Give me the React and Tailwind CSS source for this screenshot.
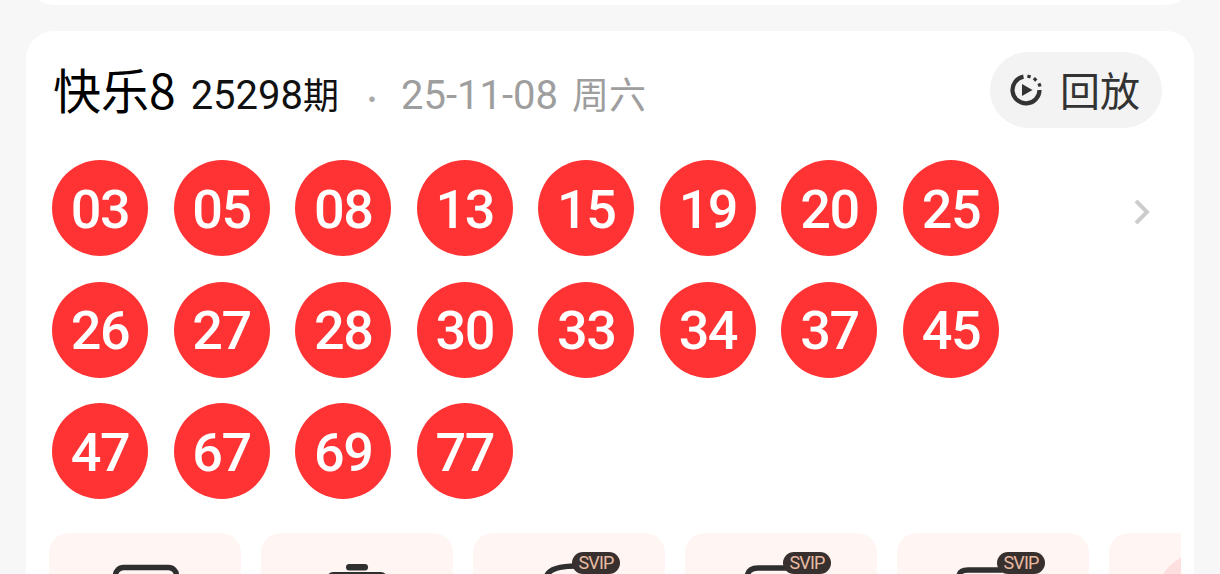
import React from "react";

const FONT = "[font-family:'Noto_Sans_CJK_SC','Noto_Sans',sans-serif]";

const numbers = ["03", "05", "08", "13", "15", "19", "20", "25", "26", "27", "28", "30", "33", "34", "37", "45", "47", "67", "69", "77"];

function ReplayIcon() {
  return (
    <svg viewBox="0 0 36 36" className="w-9 h-9 shrink-0" fill="none">
      <path d="M15.5 4.6A13.5 13.5 0 1 0 31.5 18" stroke="#333" strokeWidth="4.2" strokeLinecap="butt" />
      <path d="M14 12 L24.500 18 L14 24 Z" fill="#333" />
      <path d="M20.500 6l1-3M26 8.500l2.200-2.300M30 13.500l3-1.200" stroke="#333" strokeWidth="3.400" />
    </svg>
  );
}

function Ball({ n }) {
  return (
    <div className="w-24 h-24 rounded-full bg-[#ff3333] text-white flex items-center justify-center pt-[3px] font-['Roboto',sans-serif] font-medium text-[54px] leading-none tracking-[-1.5px]">
      {n}
    </div>
  );
}

function Badge({ className }) {
  return (
    <div className={`absolute top-[19px] w-12 h-[22px] rounded-full bg-[#38302e] text-[#e8bba3] flex items-center justify-center font-['Roboto',sans-serif] text-[18px] leading-none tracking-[-0.8px] ${className}`}>
      SVIP
    </div>
  );
}

function Tile({ children }) {
  return <div className="relative shrink-0 w-48 h-[80px] rounded-[20px] bg-[#fff5f3] overflow-hidden">{children}</div>;
}

export default function App() {
  return (
    <div className={`h-[574px] overflow-hidden bg-[#f7f7f7] px-[26px] ${FONT}`}>
      <div className="h-[5px] overflow-hidden">
        <div className="h-[60px] -mt-[55px] rounded-[28px] bg-white"></div>
      </div>

      <div className="mt-[26px] h-[600px] rounded-[28px] bg-white pl-[23px] pr-[13px] pt-[21px]">
        {/* Header */}
        <div className="flex items-center justify-between pl-[4px] pr-[19px]">
          <div className="flex items-baseline whitespace-nowrap">
            <span className="text-[48px] leading-none text-black">快乐8</span>
            <span className="ml-[15px] text-[40px] leading-none text-[#111] font-['Roboto',sans-serif]">25298</span>
            <span className="text-[36px] leading-none text-[#111]">期</span>
            <span className="ml-[20px] text-[26px] leading-none text-[#aaa]">·</span>
            <span className="ml-[16px] text-[40px] leading-none text-[#9e9e9e] font-['Roboto',sans-serif]">25-11-08</span>
            <span className="ml-[14px] text-[37px] leading-none text-[#9e9e9e]">周六</span>
          </div>
          <div className="h-[76px] w-[172px] rounded-full bg-[#f3f3f3] flex items-center pl-[18px] gap-[16px]">
            <ReplayIcon />
            <span className="-mt-[2px] text-[40px] leading-none text-[#333]">回放</span>
          </div>
        </div>

        {/* Numbers */}
        <div className="mt-[32px] ml-[3px] flex items-start justify-between pr-[31px]">
          <div className="grid grid-cols-8 w-[947px] gap-x-[25.6px] gap-y-[25.5px]">
            {numbers.map((n) => (
              <Ball key={n} n={n} />
            ))}
          </div>
          <svg viewBox="0 0 16 26" className="w-4 h-[26px] mt-[39px]" fill="none">
            <path d="M2 2l11 11L2 24" stroke="#cccccc" strokeWidth="4" />
          </svg>
        </div>

        {/* Tools */}
        <div className="mt-[34px] flex gap-5 overflow-hidden">
          <Tile>
            <svg viewBox="0 0 192 80" className="w-full h-full" fill="none">
              <path d="M66.500 60V42.500a8 8 0 0 1 8-8h45a8 8 0 0 1 8 8V60" stroke="#2f2f2f" strokeWidth="5.500" />
            </svg>
          </Tile>
          <Tile>
            <svg viewBox="0 0 192 80" className="w-full h-full" fill="none">
              <rect x="85" y="31" width="22" height="6.500" rx="3.250" fill="#2f2f2f" />
              <rect x="66" y="39" width="60" height="20" rx="6" fill="#2f2f2f" />
            </svg>
          </Tile>
          <Tile>
            <svg viewBox="0 0 192 80" className="w-full h-full" fill="none">
              <path d="M74 42c3-6 12-9 30-9" stroke="#2f2f2f" strokeWidth="5.500" />
            </svg>
            <Badge className="left-[99px]" />
          </Tile>
          <Tile>
            <svg viewBox="0 0 192 80" className="w-full h-full" fill="none">
              <path d="M62 46c0-8 4-11 11-11h30" stroke="#2f2f2f" strokeWidth="5.500" />
            </svg>
            <Badge className="left-[98px]" />
          </Tile>
          <Tile>
            <svg viewBox="0 0 192 80" className="w-full h-full" fill="none">
              <path d="M62 44c0-5 3-7 9-7h34" stroke="#2f2f2f" strokeWidth="5.500" />
            </svg>
            <Badge className="left-[100px]" />
          </Tile>
          <Tile>
            <div className="absolute left-[47px] top-[19px] w-[94px] h-[94px] rounded-full bg-[#fddfe0]"></div>
          </Tile>
        </div>
      </div>
    </div>
  );
}
